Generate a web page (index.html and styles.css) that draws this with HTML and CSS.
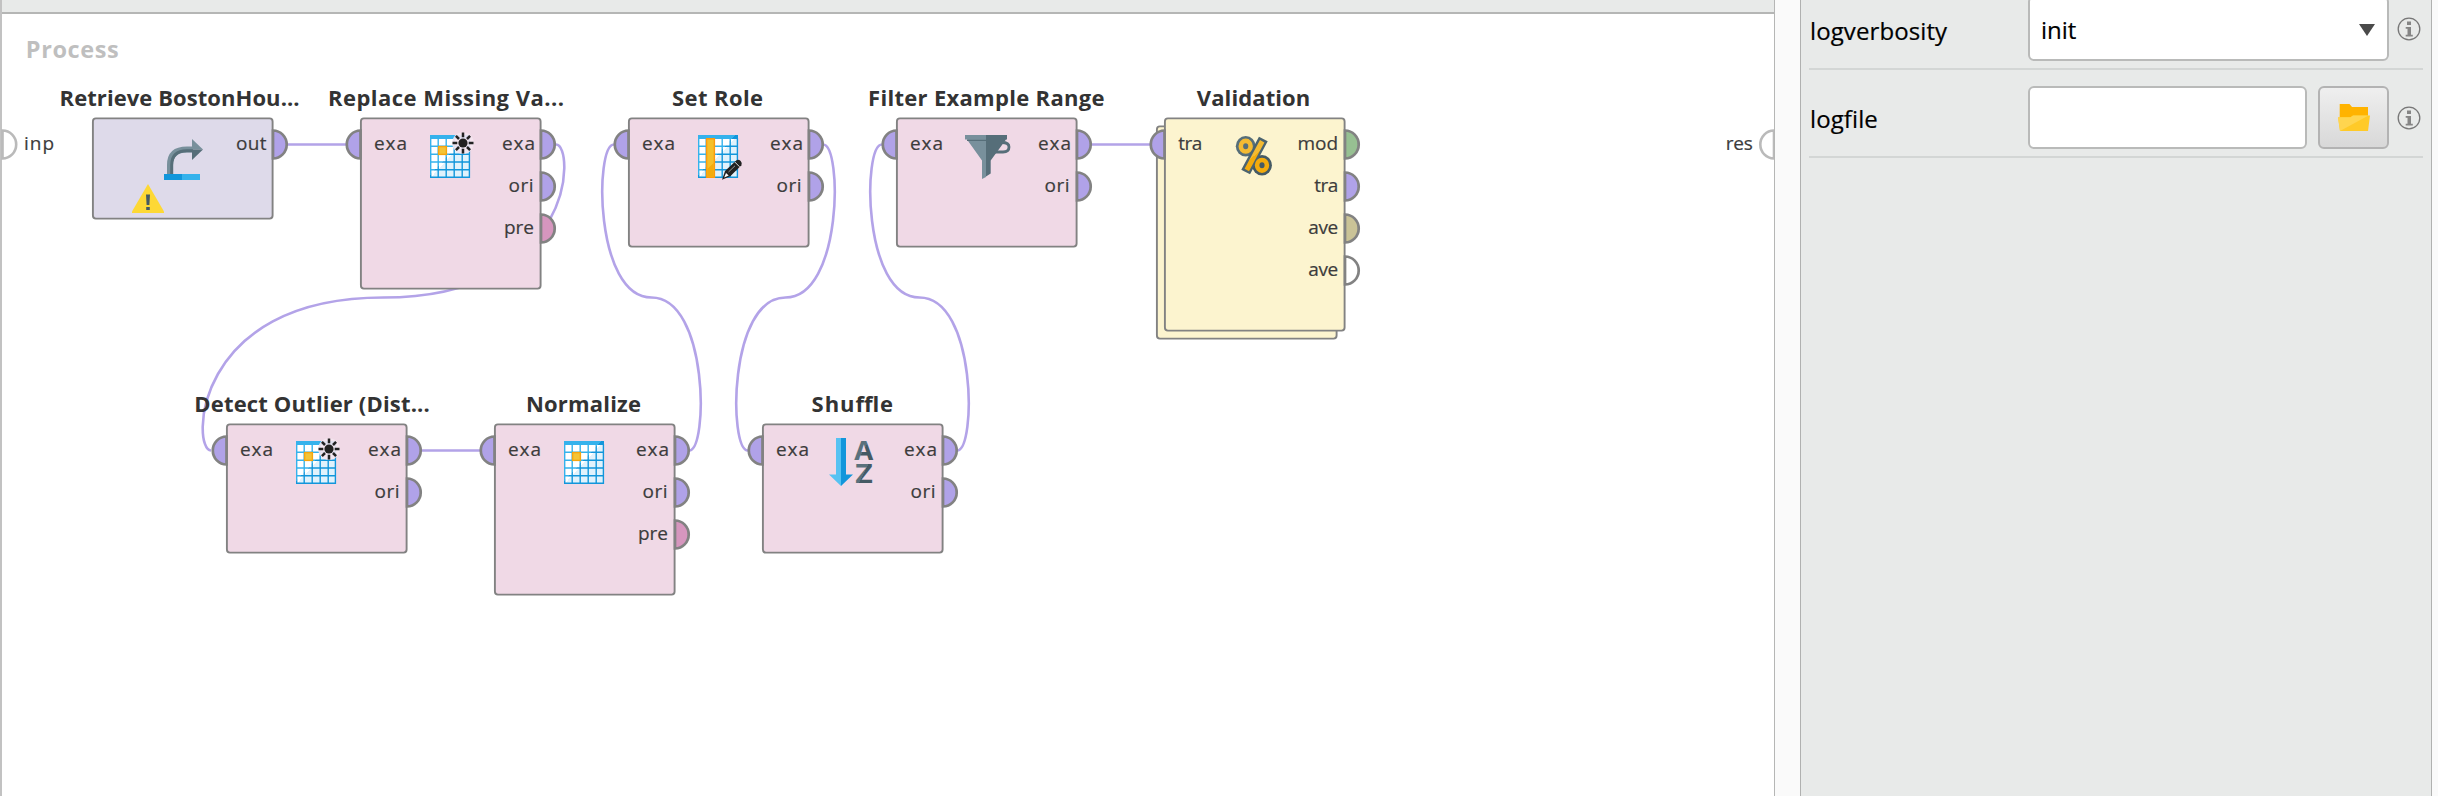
FILE: index.html
```html
<!DOCTYPE html>
<html lang="en">
<head>
<meta charset="utf-8">
<title>Process</title>
<link rel="stylesheet" href="styles.css">
</head>
<body>
<div class="app">
<main class="process">
<div class="toolbar"></div>
<svg class="canvas" width="1774" height="782" viewBox="0 14 1774 782">
<defs>
<linearGradient id="split" gradientUnits="userSpaceOnUse" x1="0" y1="0" x2="40" y2="37.2">
<stop offset="0.5" stop-color="#35b2ec"/><stop offset="0.5" stop-color="#1296db"/>
</linearGradient>
<linearGradient id="cells" gradientUnits="userSpaceOnUse" x1="0" y1="0" x2="40" y2="37.2">
<stop offset="0.54" stop-color="#ffffff"/><stop offset="0.54" stop-color="#e0f2fc"/>
</linearGradient>
<linearGradient id="slate" x1="0" y1="0" x2="1" y2="1">
<stop offset="0.5" stop-color="#5a717c"/><stop offset="0.5" stop-color="#455a64"/>
</linearGradient>
<linearGradient id="amber" gradientUnits="userSpaceOnUse" x1="0" y1="0" x2="36" y2="40">
<stop offset="0.5" stop-color="#f3ba32"/><stop offset="0.5" stop-color="#f3ab0c"/>
</linearGradient>
<g id="table">
<rect width="40" height="43" fill="url(#cells)"/>
<rect width="40" height="4" fill="url(#split)"/>
<path d="M.7 3V43M8.2 3V43M16.2 3V43M24.2 3V43M32.2 3V43M39.4 3V43M0 11.2H40M0 19.2H40M0 27H40M0 34.8H40M0 42.3H40" fill="none" stroke="url(#split)" stroke-width="1.4"/>
</g>
<g id="cell"><rect x="8.6" y="11.6" width="7.8" height="7.8" fill="#f4c437" stroke="#f5a50f" stroke-width="1.4"/></g>
<g id="burst">
<circle cx="33" cy="8" r="10.8" fill="#f5e6ef" opacity=".9"/>
<circle cx="33" cy="8" r="4.6" fill="#222"/>
<path d="M33-2.5V2.3M33 13.7V18.5M22.5 8H27.3M38.7 8H43.5M25.9.9L29 4M37 12L40.1 15.1M40.1.9L37 4M29 12L25.9 15.1" stroke="#222" stroke-width="2.5"/>
</g>
<path id="port-out" d="M0-14A13.7 14 0 0 1 0 14Z"/>
<path id="port-in" d="M0-14A13.7 14 0 0 0 0 14Z"/>
</defs>

<g class="wire">
<path d="M287 144.5H346M1092 144.5H1150M421 450.5H480"/>
<path d="M556 144.5C575.5 144.5 575.5 297.5 383.5 297.5C191.5 297.5 191.5 450.5 211 450.5"/>
<path d="M689 450.5C708.5 450.5 708.5 297.5 651.5 297.5C594.5 297.5 594.5 144.5 614 144.5"/>
<path d="M823 144.5C842.5 144.5 842.5 297.5 785.5 297.5C728.5 297.5 728.5 450.5 748 450.5"/>
<path d="M957 450.5C976.5 450.5 976.5 297.5 919.5 297.5C862.5 297.5 862.5 144.5 882 144.5"/>
</g>

<g class="outer-port"><use href="#port-out" x="2.5" y="144.5"/><use href="#port-in" x="1774" y="144.5"/></g>

<g class="node source"><rect x="92.9" y="118.4" width="179.7" height="100.2" rx="3"/></g>
<g class="node cleansing">
<rect x="360.9" y="118.4" width="179.7" height="170.2" rx="3"/>
<rect x="628.9" y="118.4" width="179.7" height="128.2" rx="3"/>
<rect x="896.9" y="118.4" width="179.7" height="128.2" rx="3"/>
<rect x="226.9" y="424.4" width="179.7" height="128.2" rx="3"/>
<rect x="494.9" y="424.4" width="179.7" height="170.2" rx="3"/>
<rect x="762.9" y="424.4" width="179.7" height="128.2" rx="3"/>
</g>
<g class="node validation">
<rect x="1156.9" y="126.4" width="179.7" height="212.2" rx="3"/>
<rect x="1164.9" y="118.4" width="179.7" height="212.2" rx="3"/>
</g>

<g class="port data">
<use href="#port-out" x="273" y="144.5"/>
<use href="#port-in" x="360.5" y="144.5"/><use href="#port-out" x="541" y="144.5"/><use href="#port-out" x="541" y="186.5"/>
<use href="#port-in" x="628.5" y="144.5"/><use href="#port-out" x="809" y="144.5"/><use href="#port-out" x="809" y="186.5"/>
<use href="#port-in" x="896.5" y="144.5"/><use href="#port-out" x="1077" y="144.5"/><use href="#port-out" x="1077" y="186.5"/>
<use href="#port-in" x="1164.5" y="144.5"/><use href="#port-out" x="1345" y="186.5"/>
<use href="#port-in" x="226.5" y="450.5"/><use href="#port-out" x="407" y="450.5"/><use href="#port-out" x="407" y="492.5"/>
<use href="#port-in" x="494.5" y="450.5"/><use href="#port-out" x="675" y="450.5"/><use href="#port-out" x="675" y="492.5"/>
<use href="#port-in" x="762.5" y="450.5"/><use href="#port-out" x="943" y="450.5"/><use href="#port-out" x="943" y="492.5"/>
</g>
<g class="port prep"><use href="#port-out" x="541" y="228.5"/><use href="#port-out" x="675" y="534.5"/></g>
<g class="port model"><use href="#port-out" x="1345" y="144.5"/></g>
<g class="port average"><use href="#port-out" x="1345" y="228.5"/></g>
<g class="port empty"><use href="#port-out" x="1345" y="270.5"/></g>

<text class="heading" x="25.8" y="58" textLength="93">Process</text>
<g class="title">
<text x="59.6" y="106" textLength="240">Retrieve BostonHou...</text>
<text x="328" y="106" textLength="236">Replace Missing Va...</text>
<text x="672" y="106" textLength="91">Set Role</text>
<text x="868" y="106" textLength="236.5">Filter Example Range</text>
<text x="1196.8" y="106" textLength="113.5">Validation</text>
<text x="194.3" y="412" textLength="235.5">Detect Outlier (Dist...</text>
<text x="526" y="412" textLength="115">Normalize</text>
<text x="811.6" y="412" textLength="81.5">Shuffle</text>
</g>
<g class="label">
<text x="24" y="150.3" textLength="30">inp</text><text x="1725.7" y="150.3" textLength="27">res</text>
<text x="236" y="150.3" textLength="30.5">out</text>
<text x="374" y="150.3" textLength="33">exa</text><text x="502" y="150.3" textLength="33">exa</text><text x="508.5" y="192.3" textLength="25">ori</text><text x="504" y="234.3" textLength="30">pre</text>
<text x="642" y="150.3" textLength="33">exa</text><text x="770" y="150.3" textLength="33">exa</text><text x="776.5" y="192.3" textLength="25">ori</text>
<text x="910" y="150.3" textLength="33">exa</text><text x="1038" y="150.3" textLength="33">exa</text><text x="1044.5" y="192.3" textLength="25">ori</text>
<text x="1178.3" y="150.3" textLength="24">tra</text><text x="1297.6" y="150.3" textLength="40.5">mod</text><text x="1314.3" y="192.3" textLength="24">tra</text><text x="1308.2" y="234.3" textLength="30">ave</text><text x="1308.2" y="276.3" textLength="30">ave</text>
<text x="240" y="456.3" textLength="33">exa</text><text x="368" y="456.3" textLength="33">exa</text><text x="374.5" y="498.3" textLength="25">ori</text>
<text x="508" y="456.3" textLength="33">exa</text><text x="636" y="456.3" textLength="33">exa</text><text x="642.5" y="498.3" textLength="25">ori</text><text x="638" y="540.3" textLength="30">pre</text>
<text x="776" y="456.3" textLength="33">exa</text><text x="904" y="456.3" textLength="33">exa</text><text x="910.5" y="498.3" textLength="25">ori</text>
</g>

<!-- retrieve -->
<path d="M170 174V165Q170 149.5 187 149.5H193" fill="none" stroke="#78909c" stroke-width="6"/>
<path d="M171.7 174V165Q171.7 150.7 187 150.7H193" fill="none" stroke="#566e79" stroke-width="3"/>
<path d="M192 139L203 149.5H192Z" fill="#78909c"/><path d="M192 149.5H203L192 160Z" fill="#566e79"/>
<path d="M164 174H182V180H164Z" fill="#1296db"/><path d="M182 174H200V180H182Z" fill="#35b2ec"/>
<path d="M148 184L164 211.5V213H132V211.5Z" fill="#fdd835"/>
<path d="M146 194.5H150L149.4 205H146.6ZM146.2 207H149.8V210H146.2Z" fill="#455a64"/>

<!-- tables -->
<g transform="translate(430 135)"><use href="#table"/><use href="#cell"/><use href="#burst"/></g>
<g transform="translate(296 441)"><use href="#table"/><use href="#cell"/><use href="#burst"/></g>
<g transform="translate(564 441)"><use href="#table"/><use href="#cell"/></g>
<g transform="translate(698 135)"><use href="#table"/>
<path d="M8.6 3.7H16.4V42.3H8.6Z" fill="#f4c02a" stroke="#fb9a0c" stroke-width="1.4"/><path d="M9.3 34L15.7 28V41.6H9.3Z" fill="#f3ab0c"/>
<path d="M24 44.8L27 36L38.5 25.2Q40.5 24 42.7 26Q44.6 28.2 43.4 30.2L32.3 41.3Z" fill="#222"/>
<path d="M26.2 42.6L28 38L30.7 40.6Z" fill="#fff"/>
<path d="M36.8 27L41.6 31.8" stroke="#ddd" stroke-width="1"/><path d="M30.5 37L37 30.8" stroke="#999" stroke-width="1"/>
</g>

<!-- filter -->
<path d="M998 142.5H1002Q1009 142.5 1009 147Q1009 152 1003 152H995" fill="none" stroke="#566e79" stroke-width="2.8"/>
<path d="M965 135H986V177L982 179V160.5L967 139.5H965Z" fill="#78909c"/>
<path d="M986 135H1007V139.5H1006L990.7 160.5V173.5L986 176.5Z" fill="#566e79"/><path d="M967 140.4H986" stroke="#566e79" stroke-width="1.2"/>

<!-- percent -->
<g transform="translate(1236 136)" fill="none">
<g fill="#566e79"><ellipse cx="9.7" cy="10.2" rx="9.9" ry="10.2"/><ellipse cx="26" cy="29.3" rx="9.9" ry="10.2" fill="#455a64"/></g>
<path d="M8.7 32.8L13 35L28.3 6.4L24 4.2Z" fill="#4b636e" stroke="#4b636e" stroke-width="5"/>
<g stroke="url(#amber)" stroke-width="4.6"><ellipse cx="9.7" cy="10.2" rx="4.9" ry="5.3"/><ellipse cx="26" cy="29.3" rx="4.9" ry="5.3"/><path d="M10.8 34L26.2 5.3" stroke-width="5"/></g>
</g>

<!-- sort -->
<path d="M836 438H841V486L829 474.5H836Z" fill="#56c2f2"/><path d="M841 438H846V474.5H853L841 486Z" fill="#1296db"/>
<g class="sort" fill="url(#slate)"><text x="854.2" y="460" textLength="19" lengthAdjust="spacingAndGlyphs">A</text><text x="855.2" y="483" textLength="17.5" lengthAdjust="spacingAndGlyphs">Z</text></g>
</svg>
</main>

<aside class="parameters">
<div class="row first">
<span class="name">logverbosity</span>
<div class="select"><span>init</span><svg width="16" height="12" viewBox="0 0 16 12"><path d="M0 0H16L8 12Z" fill="#4a4a4a"/></svg></div>
<svg class="info" width="24" height="24" viewBox="0 0 24 24"><circle cx="12" cy="12" r="10.8"/><path d="M10 4.5H14V8H10ZM8.7 10H14V17.8H15.8V19.6H8.7V17.8H10.5V11.8H8.7Z"/></svg>
</div>
<div class="row second">
<span class="name">logfile</span>
<div class="field"></div>
<div class="browse"><svg width="32" height="27" viewBox="0 0 32 27"><path d="M1.7 0H11.5L14 3H30V14H1.7Z" fill="#ffb300"/><path d="M0 13.3H12.5L15 11.5H32L30 27H2Z" fill="#ffca28"/><path d="M0 13.3H12.5L15 11.5H30.5L2 27Z" fill="#ffd54f"/></svg></div>
<svg class="info" width="24" height="24" viewBox="0 0 24 24"><circle cx="12" cy="12" r="10.8"/><path d="M10 4.5H14V8H10ZM8.7 10H14V17.8H15.8V19.6H8.7V17.8H10.5V11.8H8.7Z"/></svg>
</div>
</aside>
</div>
</body>
</html>
```
FILE: styles.css
```css
* { box-sizing: border-box; }
body { margin: 0; background: #fafafa; font-family: "Open Sans", "Noto Sans", sans-serif; overflow: hidden; }
.app { display: flex; gap: 25px; width: 2432px; height: 796px; }
.process { width: 1775px; background: #fff; border-right: 1px solid #b5b6b5; box-shadow: inset 2px 0 #c2c2c2; overflow: hidden; }
.toolbar { height: 14px; margin-left: 2px; background: #e8eae9; border-bottom: 2px solid #b5b6b5; }
.canvas { display: block; }

.wire { fill: none; stroke: #b3a3e8; stroke-width: 2.6; }
.node rect { stroke: #828282; stroke-width: 1.9; }
.source { fill: #dedaea; }
.cleansing { fill: #f0d9e6; }
.validation { fill: #fcf4cf; }
.port { stroke: #828282; stroke-width: 2.7; }
.data { fill: #b0a2e8; }
.prep { fill: #d696be; }
.model { fill: #97c092; }
.average { fill: #cac397; }
.empty { fill: #fff; }
.outer-port { fill: #fff; stroke: #bababa; stroke-width: 2.6; }

.heading { font-size: 23.5px; font-weight: 700; fill: #bfbfbf; }
.title { font-size: 22px; font-weight: 700; fill: #333; }
.label { font-size: 19px; fill: #3c3c3c; stroke: #3c3c3c; stroke-width: .2; }
.sort { font-size: 26px; font-weight: 700; }

.parameters { width: 632px; padding: 0 8px; background: #e8eae9; border-left: 1px solid #b0b1b0; border-right: 1px solid #b0b1b0; }
.row { display: flex; align-items: center; border-bottom: 2px solid #d3d6d5; }
.first { height: 70px; padding-bottom: 10px; }
.second { height: 88px; padding-bottom: 7px; padding-top: 16px; }
.name { width: 219px; flex: none; font-size: 24px; line-height: 32px; letter-spacing: .1px; color: #000; padding: 3px 0 0 1px; -webkit-text-stroke: .2px #000; }
.select { width: 361px; height: 65px; margin-top: -1px; border: 2px solid #b9bab9; border-radius: 6px; background: #fff; display: flex; align-items: center; justify-content: space-between; padding: 2px 12px 0 11px; font-size: 24px; -webkit-text-stroke: .2px #000; }
.field { width: 279px; height: 63px; border: 2px solid #b9bab9; border-radius: 6px; background: #fff; }
.browse { width: 71px; height: 63px; margin-left: 11px; display: flex; align-items: center; justify-content: center; border: 2px solid #b3b3b3; border-radius: 6px; background: linear-gradient(#efefef, #d8d8d8); }
.info { margin-left: 8px; fill: #858585; }
.info circle { fill: none; stroke: #777; stroke-width: 1.3; }
```
